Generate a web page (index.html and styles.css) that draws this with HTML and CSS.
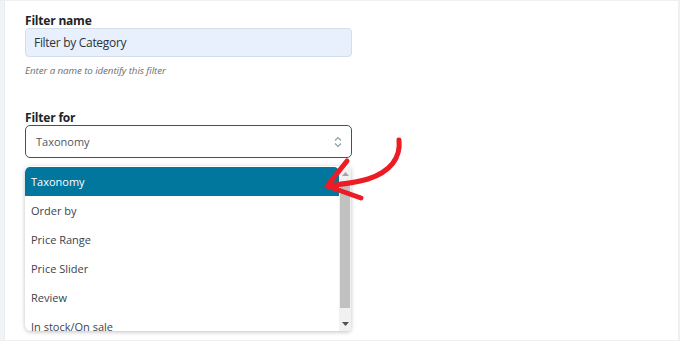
FILE: index.html
```html
<!DOCTYPE html>
<html>
<head>
<meta charset="utf-8">
<link rel="stylesheet" href="styles.css">
</head>
<body>
<div class="frame">
  <div class="strip"></div>
  <div class="panel">
    <div class="field">
      <div class="label">Filter name</div>
      <div class="input">Filter by Category</div>
      <div class="hint">Enter a name to identify this filter</div>
    </div>
    <div class="field field-for">
      <div class="label">Filter for</div>
      <div class="select">
        <span>Taxonomy</span>
        <svg class="chev" width="8" height="12" viewBox="0 0 8 12"><path d="M1 4.5 L4 1.5 L7 4.5 M1 7.5 L4 10.5 L7 7.5" fill="none" stroke="#8a9aa6" stroke-width="1.1"/></svg>
      </div>
      <div class="dropdown">
        <div class="options">
          <div class="opt active">Taxonomy</div>
          <div class="opt">Order by</div>
          <div class="opt">Price Range</div>
          <div class="opt">Price Slider</div>
          <div class="opt">Review</div>
          <div class="opt">In stock/On sale</div>
        </div>
        <div class="scrollbar">
          <div class="sb-btn"><svg width="7" height="4" viewBox="0 0 7 4"><path d="M0 4 L3.5 0 L7 4 Z" fill="#a3a3a3"/></svg></div>
          <div class="thumb"></div>
          <div class="track"></div>
          <div class="sb-btn"><svg width="7" height="4" viewBox="0 0 7 4"><path d="M0 0 L3.5 4 L7 0 Z" fill="#505050"/></svg></div>
        </div>
      </div>
    </div>
  </div>
  <svg class="arrow" width="100" height="80" viewBox="320 130 100 80">
    <path d="M399 140 C401 158 390 172 368 179 C355 183 342 184 328 186" fill="none" stroke="#ec1c24" stroke-width="5" stroke-linecap="round"/>
    <path d="M347 161 L327 186 L361 198" fill="none" stroke="#ec1c24" stroke-width="5" stroke-linecap="round" stroke-linejoin="round"/>
  </svg>
</div>
</body>
</html>
```

FILE: styles.css
```css
* { box-sizing: border-box; }
html, body { margin: 0; padding: 0; }
body {
  width: 680px;
  height: 341px;
  overflow: hidden;
  background: #fff;
  font-family: "Open Sans", "Noto Sans", sans-serif;
}
.frame {
  position: relative;
  display: flex;
  width: 680px;
  height: 341px;
  border-top: 1px solid #efefef;
  border-right: 2px solid #efefef;
  border-bottom: 1px solid #efefef;
  overflow: hidden;
}
.strip {
  width: 5px;
  background: #f1f4f7;
  border-right: 1px solid #e9edf1;
  flex: none;
}
.panel {
  flex: 1;
  padding: 12px 0 0 20px;
}
.label {
  font-weight: 700;
  font-size: 12px;
  color: #1d2327;
  line-height: 15px;
  letter-spacing: -0.2px;
}
.input {
  width: 327px;
  height: 29px;
  background: #e8f0fe;
  border: 1px solid #d5dde8;
  border-radius: 4px;
  font-size: 12px;
  color: #2c3338;
  padding: 0 8px;
  line-height: 27px;
  letter-spacing: -0.3px;
}
.hint {
  font-size: 9.8px;
  font-style: italic;
  color: #6b6f73;
  margin-top: 7px;
  letter-spacing: -0.1px;
}
.field-for {
  margin-top: 33px;
}
.select {
  width: 327px;
  height: 33px;
  border: 1.5px solid #1f5f7e;
  border-radius: 5px;
  display: flex;
  align-items: center;
  justify-content: space-between;
  padding: 0 9px 0 10px;
  font-size: 11px;
  color: #50575e;
}
.chev { margin-top: 1px; }
.dropdown {
  margin-top: 8px;
  width: 326px;
  height: 165px;
  display: flex;
  background: #fff;
  border-radius: 6px 4px 4px 6px;
  box-shadow: 0 1px 4px rgba(0,0,0,0.25);
  overflow: hidden;
}
.options {
  flex: 1;
  padding-top: 1px;
}
.opt {
  height: 29px;
  line-height: 29px;
  padding-left: 6px;
  font-size: 11px;
  color: #3c434a;
}
.opt.active {
  background: #02779e;
  color: #fff;
  border-radius: 5px 5px 0 0;
}
.scrollbar {
  width: 12px;
  flex: none;
  background: #f1f1f1;
  display: flex;
  flex-direction: column;
  margin-top: 1px;
}
.sb-btn {
  height: 14px;
  display: flex;
  align-items: center;
  justify-content: center;
}
.thumb {
  height: 127px;
  background: #c1c1c1;
  margin: 0 1px;
}
.track { flex: 1; }
.arrow {
  position: absolute;
  left: 320px;
  top: 129px;
}
```
